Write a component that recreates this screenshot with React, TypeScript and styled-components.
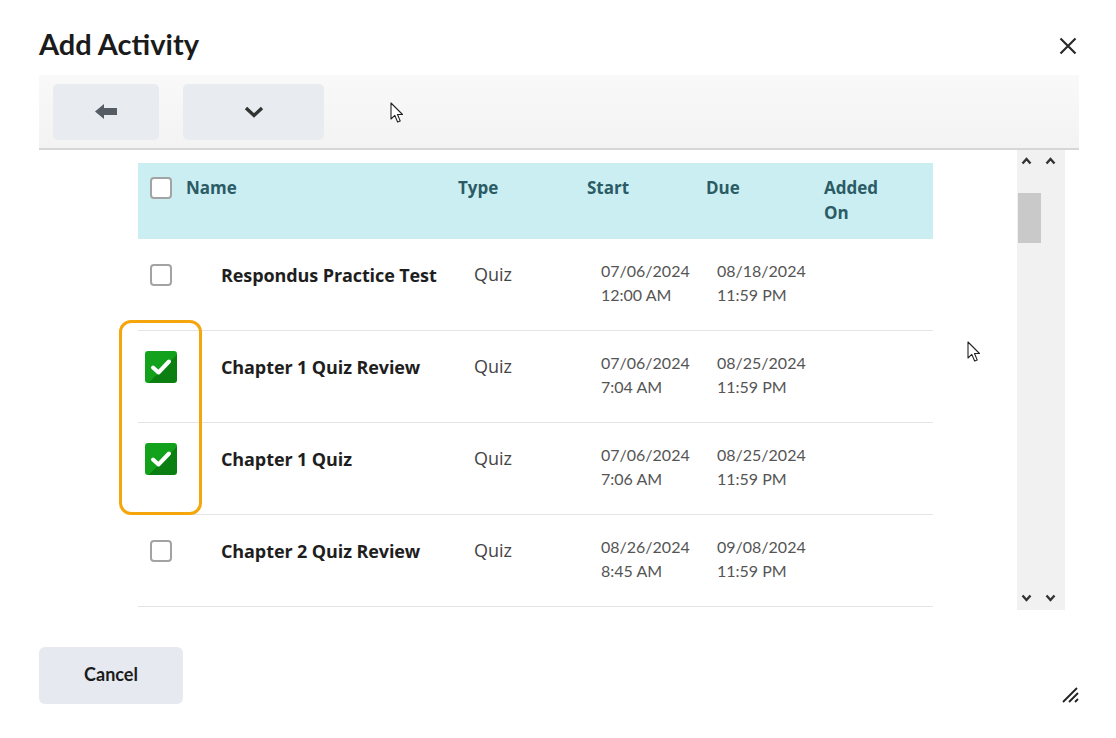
import React from 'react';
import styled, { createGlobalStyle } from 'styled-components';

const Global = createGlobalStyle`
  * {
    box-sizing: border-box;
  }
  body {
    margin: 0;
    background: #fff;
    font-family: Lato, "Open Sans", sans-serif;
  }
`;

const Page = styled.div`
  position: relative;
  width: 1116px;
  height: 738px;
  padding: 0 37px 0 39px;
  display: flex;
  flex-direction: column;
`;

const Header = styled.div`
  height: 75px;
  padding-top: 27px;
  display: flex;
  justify-content: space-between;
  align-items: flex-start;
`;

const Title = styled.h1`
  margin: 0;
  font-size: 29px;
  line-height: 34px;
  font-weight: 700;
  color: #1b1b1b;
`;

const CloseButton = styled.button`
  border: 0;
  background: none;
  padding: 0;
  margin: 10px 2px 0 0;
  width: 18px;
  height: 18px;
  display: flex;
`;

const Toolbar = styled.div`
  height: 75px;
  display: flex;
  align-items: center;
  gap: 24px;
  padding-left: 14px;
  background: linear-gradient(180deg, #f9f9f9 0%, #f3f3f3 100%);
  border-bottom: 2px solid #d6d6d6;
`;

const ToolButton = styled.button<{ $w: number }>`
  width: ${p => p.$w}px;
  height: 56px;
  border: 0;
  border-radius: 5px;
  background: #e8ebf0;
  display: flex;
  align-items: center;
  justify-content: center;
  padding: 0;
`;

const Body = styled.div`
  height: 460px;
  display: flex;
`;

const Content = styled.div`
  width: 978px;
  height: 100%;
  overflow: hidden;
  padding: 13px 0 0 99px;
  font-family: "Open Sans", Lato, sans-serif;
`;

const Table = styled.div`
  position: relative;
  width: 795px;
`;

const HeadRow = styled.div`
  display: grid;
  grid-template-columns: 36px 272px 129px 119px 118px 1fr;
  height: 76px;
  padding: 12px 0 0 12px;
  background: #cbeef3;
  color: #2b5c65;
  font-size: 17px;
  font-weight: 700;
  line-height: 25px;
`;

const HeadCell = styled.div``;

const Row = styled.div`
  display: grid;
  grid-template-columns: 71px 253px 127px 116px 1fr;
  height: 92px;
  padding: 20px 0 0 12px;
  border-bottom: 1px solid #e4e4e4;
`;

const CheckCell = styled.div`
  width: 22px;
  height: 32px;
  display: flex;
  align-items: center;
  justify-content: center;
`;

const Box = styled.span<{ $checked?: boolean }>`
  flex: none;
  display: flex;
  align-items: center;
  justify-content: center;
  width: ${p => (p.$checked ? 32 : 22)}px;
  height: ${p => (p.$checked ? 32 : 22)}px;
  border-radius: ${p => (p.$checked ? 3 : 4)}px;
  border: ${p => (p.$checked ? 'none' : '2px solid #a3a3a3')};
  background: ${p =>
    p.$checked
      ? 'linear-gradient(135deg, #14a31d 0%, #12a01b 55%, #0b7f12 56%, #0b7f12 100%)'
      : '#fff'};
`;

const HeadBox = styled(Box)`
  margin-top: 2px;
`;

const Name = styled.div`
  font-size: 18px;
  font-weight: 700;
  line-height: 32px;
  letter-spacing: -0.1px;
  color: #1e1e1e;
`;

const Type = styled.div`
  font-size: 18px;
  line-height: 30px;
  color: #444;
`;

const DateCell = styled.div`
  font-family: Lato, "Open Sans", sans-serif;
  font-size: 16px;
  line-height: 24px;
  color: #555;
`;

const Highlight = styled.div`
  position: absolute;
  left: -19px;
  top: 157px;
  width: 83px;
  height: 195px;
  border: 3px solid #f5a60c;
  border-radius: 12px;
  pointer-events: none;
`;

const ScrollTrack = styled.div`
  width: 48px;
  height: 100%;
  background: #f1f1f1;
  display: flex;
  flex-direction: column;
  align-items: flex-start;
  padding-top: 7px;
`;

const ArrowPair = styled.div`
  display: flex;
  gap: 13px;
  padding-left: 4px;
`;

const Thumb = styled.div`
  margin: 28px 0 0 1px;
  width: 23px;
  height: 50px;
  background: #c9c9c9;
`;

const TrackSpacer = styled.div`
  flex: 1;
`;

const Footer = styled.div`
  padding-top: 37px;
  display: flex;
  justify-content: space-between;
  align-items: flex-end;
`;

const CancelButton = styled.button`
  width: 144px;
  height: 57px;
  border: 0;
  border-radius: 6px;
  background: #e6e9ef;
  font-family: Lato, sans-serif;
  font-size: 18px;
  font-weight: 700;
  color: #1b1b1b;
  padding: 0 0 4px;
`;

const Grip = styled.svg`
  margin-bottom: 1px;
`;

const Cursor = styled.svg<{ $x: number; $y: number }>`
  position: absolute;
  left: ${p => p.$x}px;
  top: ${p => p.$y}px;
`;

const rows = [
  { name: 'Respondus Practice Test', checked: false, start: ['07/06/2024', '12:00 AM'], due: ['08/18/2024', '11:59 PM'] },
  { name: 'Chapter 1 Quiz Review', checked: true, start: ['07/06/2024', '7:04 AM'], due: ['08/25/2024', '11:59 PM'] },
  { name: 'Chapter 1 Quiz', checked: true, start: ['07/06/2024', '7:06 AM'], due: ['08/25/2024', '11:59 PM'] },
  { name: 'Chapter 2 Quiz Review', checked: false, start: ['08/26/2024', '8:45 AM'], due: ['09/08/2024', '11:59 PM'] },
];

const Check = () => (
  <svg width="22" height="18" viewBox="0 0 22 18">
    <path d="M3 9.5 L8.5 14.5 L19 3.5" fill="none" stroke="#fff" strokeWidth="4" strokeLinecap="round" strokeLinejoin="round" />
  </svg>
);

const SmallUp = () => (
  <svg width="11" height="8" viewBox="0 0 11 8">
    <path d="M1.5 6.5 L5.5 2 L9.5 6.5" fill="none" stroke="#333" strokeWidth="2.4" />
  </svg>
);

const SmallDown = () => (
  <svg width="11" height="8" viewBox="0 0 11 8">
    <path d="M1.5 1.5 L5.5 6 L9.5 1.5" fill="none" stroke="#333" strokeWidth="2.4" />
  </svg>
);

const Pointer = ({ x, y }: { x: number; y: number }) => (
  <Cursor $x={x} $y={y} width="14" height="22" viewBox="0 0 14 22">
    <path d="M1 1 L1 17 L4.8 13.4 L7.6 20 L10.2 18.9 L7.5 12.5 L12.5 12.5 Z" fill="#fff" stroke="#222" strokeWidth="1.1" strokeLinejoin="round" />
  </Cursor>
);

export default function App() {
  return (
    <Page>
      <Global />
      <Header>
        <Title>Add Activity</Title>
        <CloseButton aria-label="Close">
          <svg width="18" height="18" viewBox="0 0 18 18">
            <path d="M1.5 1.5 L16.5 16.5 M16.5 1.5 L1.5 16.5" stroke="#2a2a2a" strokeWidth="2.2" />
          </svg>
        </CloseButton>
      </Header>
      <Toolbar>
        <ToolButton $w={106} aria-label="Back">
          <svg width="22" height="15" viewBox="0 0 22 15">
            <path d="M0 7.5 L9 0 L9 4 L22 4 L22 11 L9 11 L9 15 Z" fill="#555c63" />
          </svg>
        </ToolButton>
        <ToolButton $w={141} aria-label="More">
          <svg width="20" height="12" viewBox="0 0 20 12">
            <path d="M2 2 L10 9.5 L18 2" fill="none" stroke="#333" strokeWidth="3.4" />
          </svg>
        </ToolButton>
      </Toolbar>
      <Body>
        <Content>
          <Table>
            <HeadRow>
              <HeadCell>
                <HeadBox />
              </HeadCell>
              <HeadCell>Name</HeadCell>
              <HeadCell>Type</HeadCell>
              <HeadCell>Start</HeadCell>
              <HeadCell>Due</HeadCell>
              <HeadCell>
                Added
                <br />
                On
              </HeadCell>
            </HeadRow>
            {rows.map(r => (
              <Row key={r.name}>
                <CheckCell>
                  <Box $checked={r.checked}>{r.checked && <Check />}</Box>
                </CheckCell>
                <Name>{r.name}</Name>
                <Type>Quiz</Type>
                <DateCell>
                  {r.start[0]}
                  <br />
                  {r.start[1]}
                </DateCell>
                <DateCell>
                  {r.due[0]}
                  <br />
                  {r.due[1]}
                </DateCell>
              </Row>
            ))}
            <Highlight />
          </Table>
        </Content>
        <ScrollTrack>
          <ArrowPair>
            <SmallUp />
            <SmallUp />
          </ArrowPair>
          <Thumb />
          <TrackSpacer />
          <ArrowPair>
            <SmallDown />
            <SmallDown />
          </ArrowPair>
          <div style={{ height: 8 }} />
        </ScrollTrack>
      </Body>
      <Footer>
        <CancelButton>Cancel</CancelButton>
        <Grip width="17" height="17" viewBox="0 0 17 17">
          <path d="M1 16 L15 2 M7 16 L16 7 M13 16 L16 13" stroke="#222" strokeWidth="1.8" />
        </Grip>
      </Footer>
      <Pointer x={390} y={102} />
      <Pointer x={967} y={341} />
    </Page>
  );
}
